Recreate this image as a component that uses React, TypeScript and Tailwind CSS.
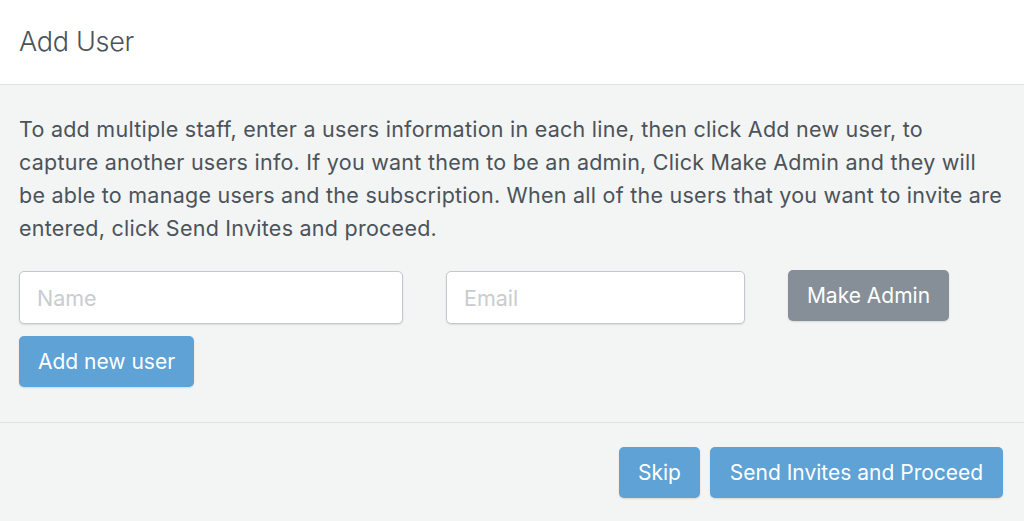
import React from "react";

const blueBtn =
  "h-[51px] rounded-[5px] bg-[#5ea2d6] text-white text-[21px] shadow-[0_1px_2px_rgba(0,0,0,0.12)]";

const inputClass =
  "h-[53px] rounded-[5px] border border-[#c3c7cc] bg-white px-[17px] text-[21.5px] text-[#4b535a] placeholder:text-[#c9ccd1] shadow-[0_1px_2px_rgba(0,0,0,0.1)] outline-none";

const lines = [
  "To add multiple staff, enter a users information in each line, then click Add new user, to",
  "capture another users info. If you want them to be an admin, Click Make Admin and they will",
  "be able to manage users and the subscription. When all of the users that you want to invite are",
  "entered, click Send Invites and proceed.",
];

const App: React.FC = () => {
  return (
    <div className="w-[1024px] h-[521px] bg-[#f3f4f4] flex flex-col overflow-hidden font-['Inter',sans-serif]">
      {/* Header */}
      <div className="h-[85px] shrink-0 bg-white border-b border-[#dfe1e3] flex items-center px-[19px]">
        <h1 className="text-[27px] font-light text-[#4b535a] tracking-[-0.3px]">Add User</h1>
      </div>

      {/* Body */}
      <div className="h-[338px] shrink-0 border-b border-[#dfe1e3] px-[19px] pt-[28px]">
        <p className="text-[21.5px] leading-[33px] text-[#4b535a] tracking-[0.25px]">
          {lines.map((l) => (
            <span key={l} className="block whitespace-nowrap">
              {l}
            </span>
          ))}
        </p>
        <div className="flex items-start mt-[26px]">
          <input className={`${inputClass} w-[384px]`} placeholder="Name" />
          <input className={`${inputClass} w-[299px] ml-[43px]`} placeholder="Email" />
          <button className="ml-[43px] mt-[-1px] h-[51px] w-[161px] rounded-[5px] bg-[#868f97] text-white text-[21px] shadow-[0_1px_2px_rgba(0,0,0,0.12)]">
            Make Admin
          </button>
        </div>
        <button className={`${blueBtn} mt-[12px] w-[175px]`}>Add new user</button>
      </div>

      {/* Footer */}
      <div className="flex justify-end items-start gap-[10px] pt-[24px] pr-[21px]">
        <button className={`${blueBtn} w-[81px]`}>Skip</button>
        <button className={`${blueBtn} w-[293px]`}>Send Invites and Proceed</button>
      </div>
    </div>
  );
};

export default App;
